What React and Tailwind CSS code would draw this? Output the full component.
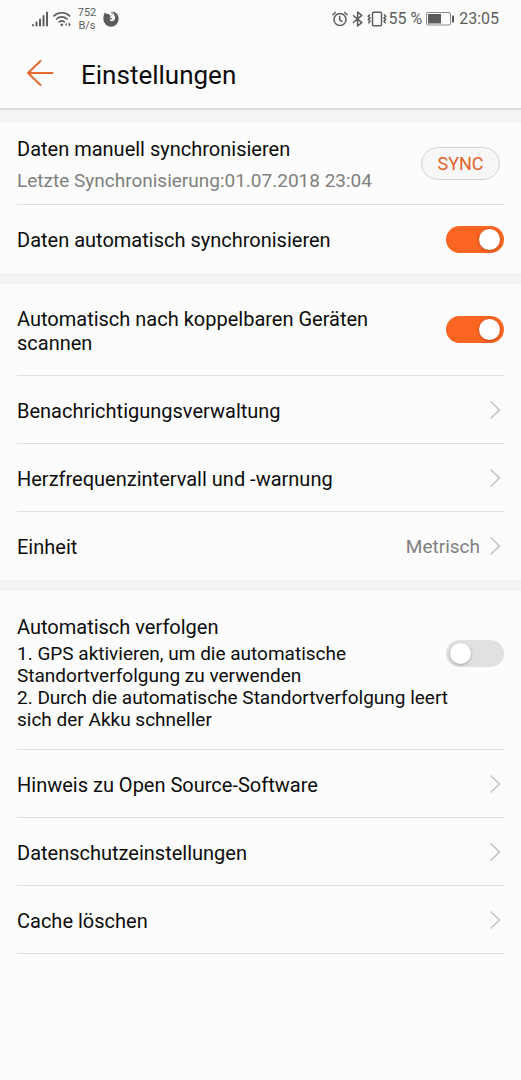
import { useState } from 'react';

function StatusBar() {
  return (
    <div className="flex h-[38px] items-center justify-between pl-8 pr-[22px] text-[#5c5c5c]">
      <div className="flex items-center">
        <svg width="17" height="16" viewBox="0 0 17 16" fill="currentColor">
          <rect x="0" y="13" width="2" height="2.5" rx="1" />
          <rect x="3.5" y="10.5" width="2" height="5" rx="1" />
          <rect x="7" y="7.5" width="2" height="8" rx="1" />
          <rect x="10.5" y="4" width="2" height="11.5" rx="1" />
          <rect x="14" y="0.5" width="2" height="15" rx="1" />
        </svg>
        <svg className="ml-1" width="19" height="16" viewBox="0 0 19 16" fill="none" stroke="currentColor" strokeWidth="1.7" strokeLinecap="round">
          <path d="M1 4.800a11.500 11.500 0 0 1 15.600 0M3.600 8a7.600 7.600 0 0 1 10.400 0M6.200 10.900a3.900 3.900 0 0 1 5 0" />
          <circle cx="8.800" cy="13.800" r="1.400" fill="currentColor" stroke="none" />
          <path d="M12 13.500l1.700-1.700v3.400zM18 13.500l-2.400-2v4z" fill="currentColor" stroke="none" />
        </svg>
        <div className="ml-1 w-[22px] text-center text-[11px] leading-[13px]">
          <div>752</div>
          <div>B/s</div>
        </div>
        <svg className="ml-[5px]" width="16" height="16" viewBox="0 0 16 16">
          <path d="M2 1.200l1.300 1.600 2.400.2L8 5.200l1.200-1.600L8 .8c3.600-.6 6.400 1.600 7.300 4.600.2.800.4 1.700.3 2.700a7.600 7.600 0 0 1-15.200 0C.300 5.500.9 3 2 1.200z" fill="currentColor" />
          <path d="M8.200.8c1 .8 1.500 1.800 1.300 2.800L7.800 5.400 6.300 6.300c.7.900 2 .7 2.900.8-.4 1.400-1.600 1.900-3 1.600 1 1.600 3.200 1.900 4.700.7 1.600-1.300 1.700-3.600.4-5.200C11 3 10 1.400 8.200.8z" fill="#fcfcfc" />
        </svg>
      </div>
      <div className="flex items-center">
        <svg width="16" height="16" viewBox="0 0 16 16" fill="none" stroke="currentColor" strokeWidth="1.5" strokeLinecap="round">
          <circle cx="8" cy="8.500" r="6" />
          <path d="M7.700 5.300v3.500l2.200 1.600M.9 3.700l2.400-2.200M15.100 3.700l-2.400-2.200" />
        </svg>
        <svg className="ml-1" width="12" height="16" viewBox="0 0 12 16" fill="none" stroke="currentColor" strokeWidth="1.500" strokeLinejoin="round">
          <path d="M1 4.200l8.800 7.400L5.600 15V1l4.200 3.400L1 11.800" />
        </svg>
        <svg className="ml-[3px]" width="20" height="16" viewBox="0 0 20 16" fill="none" stroke="currentColor" strokeWidth="1.500">
          <rect x="5.500" y="1.200" width="9" height="13.600" rx="1.200" />
          <path d="M3 3.500L1.300 5.200 3 6.900 1.300 8.600 3 10.300l-1.700 2M17 3.500l1.700 1.700L17 6.900l1.700 1.700L17 10.300l1.700 2" strokeWidth="1.500" />
        </svg>
        <span className="ml-px text-base">55 %</span>
        <svg className="ml-1" width="29" height="14" viewBox="0 0 29 14">
          <rect x="0.500" y="0.500" width="24" height="12.500" rx="1.500" fill="none" stroke="#8a8a8a" />
          <rect x="2" y="2" width="13" height="9.500" fill="currentColor" />
          <rect x="26" y="3.500" width="2" height="7" rx="0.500" fill="currentColor" />
        </svg>
        <span className="ml-1 text-base">23:05</span>
      </div>
    </div>
  );
}

function Toggle({ id, defaultChecked }) {
  const [checked, setChecked] = useState(defaultChecked);

  return (
    <input
      id={id}
      type="checkbox"
      role="switch"
      checked={checked}
      onChange={e => setChecked(e.target.checked)}
      className="flex h-[27px] w-[58px] shrink-0 cursor-pointer appearance-none items-center rounded-full bg-[#e1e1e1] px-1 before:size-[21px] before:rounded-full before:bg-white before:shadow-[0_1px_3px_rgba(0,0,0,0.3)] checked:justify-end checked:bg-[#fb6522]"
    />
  );
}

function Chevron() {
  return (
    <svg className="shrink-0" width="20" height="20" viewBox="0 0 20 20" fill="none" stroke="#c4c4c4" strokeWidth="1.600">
      <path d="M6.500 1.500l9 8.500-9 8.500" />
    </svg>
  );
}

function LinkRow({ label, value, last }) {
  return (
    <a href="#" className={`flex h-[68px] items-center justify-between ${last ? '' : 'border-b border-[#dedede]'}`}>
      <span className="pt-0.5">{label}</span>
      <span className="flex items-center gap-1 text-[19px] text-[#808080]">
        {value && <span className="pt-0.5">{value}</span>}
        <Chevron />
      </span>
    </a>
  );
}

export default function App() {
  return (
    <div className="min-h-screen bg-[#fcfcfc] font-['Roboto',sans-serif] text-xl leading-6 text-[#0c0c0c]">
      <StatusBar />
      <header className="flex h-[72px] items-center border-b-2 border-[#dcdcdc] pl-[26px]">
        <button type="button" aria-label="Zurück" className="cursor-pointer">
          <svg width="28" height="28" viewBox="0 0 28 28" fill="none" stroke="#e8692f" strokeWidth="2" strokeLinecap="round" strokeLinejoin="round">
            <path d="M14.500 2L2 14l12.500 12M2 14h24.500" />
          </svg>
        </button>
        <h1 className="ml-[27px] pt-1 text-[26px] leading-8">Einstellungen</h1>
      </header>

      <main>
        <section className="border-t-[13px] border-[#f4f4f4] px-[17px]">
          <div className="flex h-[82px] items-center justify-between border-b border-[#dedede]">
            <div className="pt-0.5">
              <p>Daten manuell synchronisieren</p>
              <p className="mt-2 text-[19px] text-[#808080]">Letzte Synchronisierung:01.07.2018 23:04</p>
            </div>
            <button type="button" className="mr-1 h-[33px] w-[79px] cursor-pointer rounded-full border border-[#d2d2d2] bg-[#f7f7f7] text-lg text-[#e0622c]">
              SYNC
            </button>
          </div>
          <div className="flex h-[68px] items-center justify-between">
            <label htmlFor="auto-sync" className="pt-0.5">Daten automatisch synchronisieren</label>
            <Toggle id="auto-sync" defaultChecked={true} />
          </div>
        </section>

        <section className="border-t-[11px] border-[#f4f4f4] px-[17px]">
          <div className="flex h-[92px] items-center justify-between gap-16 border-b border-[#dedede]">
            <label htmlFor="auto-scan" className="pt-0.5">Automatisch nach koppelbaren Geräten scannen</label>
            <Toggle id="auto-scan" defaultChecked={true} />
          </div>
          <LinkRow label="Benachrichtigungsverwaltung" />
          <LinkRow label="Herzfrequenzintervall und -warnung" />
          <LinkRow label="Einheit" value="Metrisch" last />
        </section>

        <section className="border-t-[11px] border-[#f4f4f4] px-[17px]">
          <div className="flex items-start justify-between border-b border-[#dedede] pb-[18px] pt-6">
            <div className="-mr-3 flex-1">
              <label htmlFor="auto-track">Automatisch verfolgen</label>
              <div className="mt-1 text-[19px] leading-[22px]">
                <p>1. GPS aktivieren, um die automatische<br />Standortverfolgung zu verwenden</p>
                <p>2. Durch die automatische Standortverfolgung leert sich der Akku schneller</p>
              </div>
            </div>
            <div className="flex pt-[25px]">
              <Toggle id="auto-track" defaultChecked={false} />
            </div>
          </div>
          <LinkRow label="Hinweis zu Open Source-Software" />
          <LinkRow label="Datenschutzeinstellungen" />
          <LinkRow label="Cache löschen" />
        </section>
      </main>
    </div>
  );
}
